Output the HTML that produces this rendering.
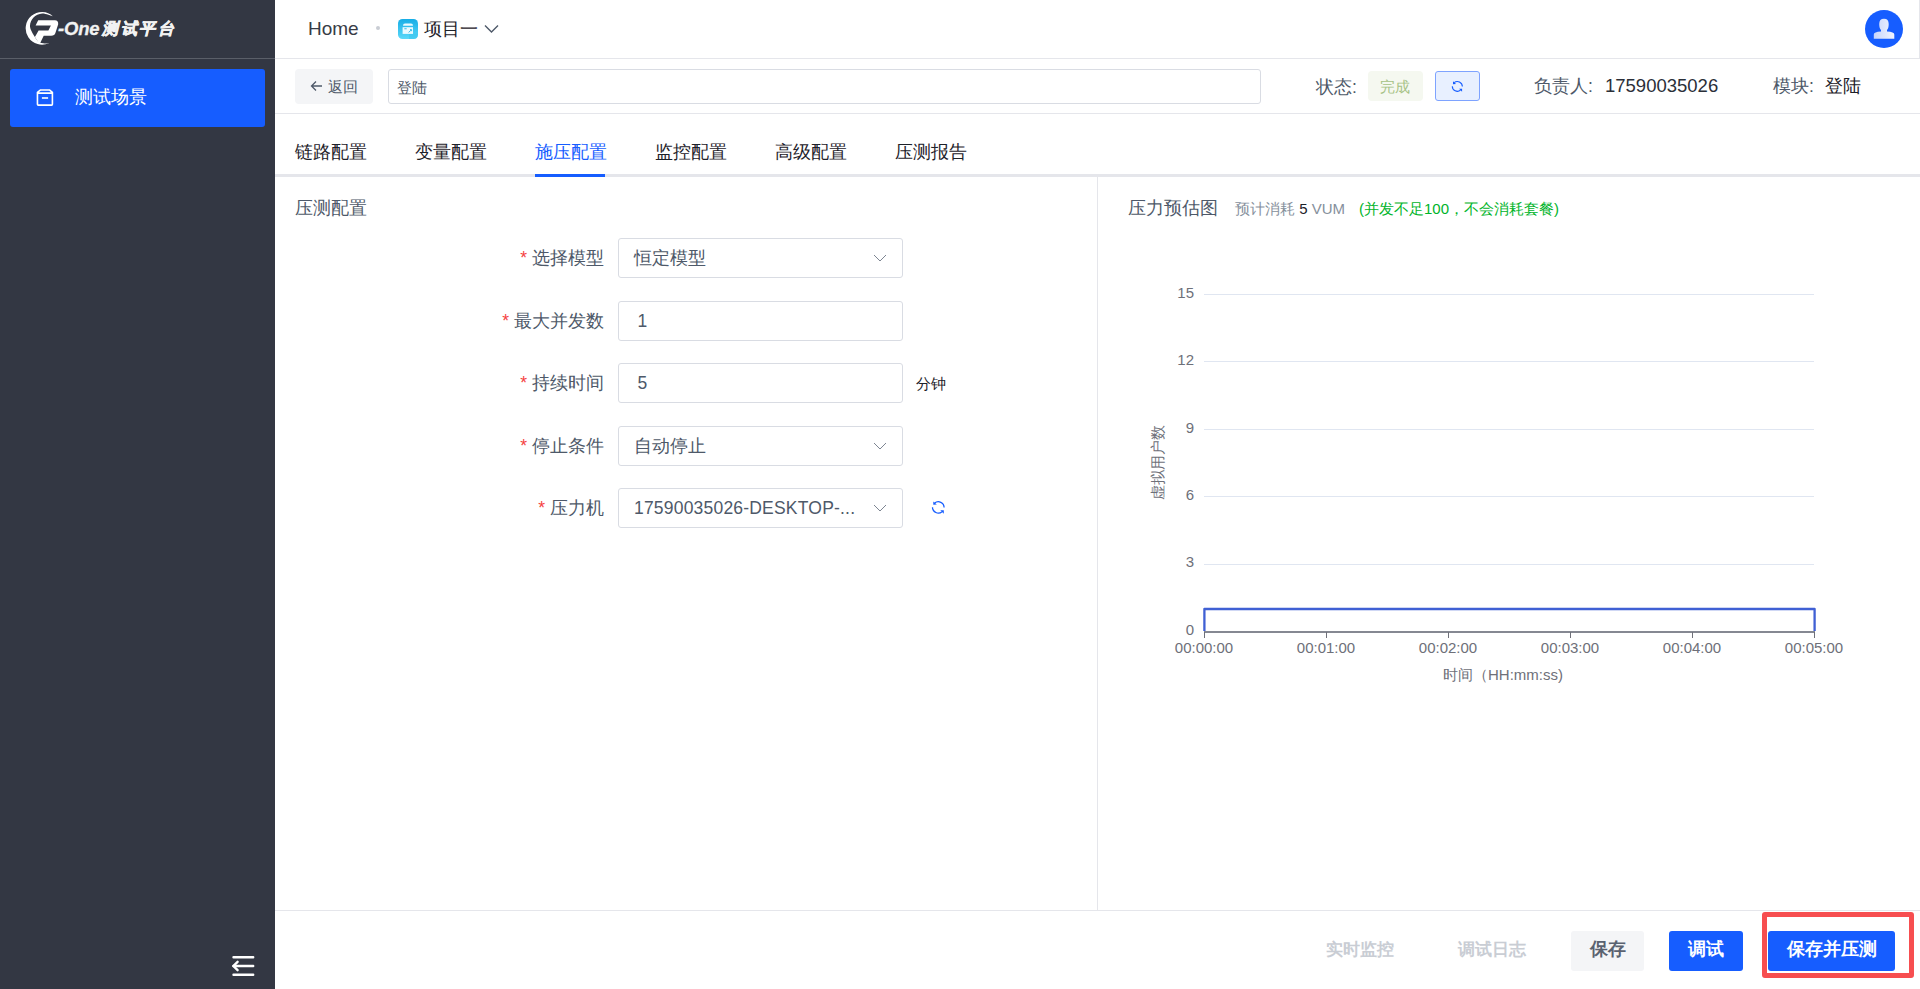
<!DOCTYPE html>
<html><head><meta charset="utf-8">
<style>
*{box-sizing:border-box;margin:0;padding:0}
html,body{width:1920px;height:989px;overflow:hidden;background:#fff;font-family:"Liberation Sans",sans-serif;color:#1d2129}
.abs{position:absolute}
#side{position:absolute;left:0;top:0;width:275px;height:989px;background:#333743}
#side .logoline{position:absolute;left:0;top:58px;width:275px;height:1px;background:#5a5e68}
#menu{position:absolute;left:10px;top:69px;width:255px;height:58px;background:#165dff;border-radius:3px}
#menu .t{position:absolute;left:65px;top:18px;font-size:17.5px;line-height:20px;color:#fff}
#hdr{position:absolute;left:275px;top:0;width:1645px;height:59px;border-bottom:1px solid #e5e6eb;border-right:1px solid #e5e6eb;background:#fff}
.txt{position:absolute;white-space:nowrap;line-height:1}
.row2line{position:absolute;left:275px;top:113px;width:1645px;height:1px;background:#e5e6eb}
.btnback{position:absolute;left:295px;top:69px;width:78px;height:35px;background:#f4f5f7;border-radius:4px}
.inp{position:absolute;border:1px solid #d9dce3;border-radius:3px;background:#fff}
.tabline{position:absolute;left:275px;top:174px;width:1645px;height:3px;background:#e5e6eb}
.tab{position:absolute;top:144px;font-size:17.5px;line-height:17px;color:#1d2129;white-space:nowrap}
.vdiv{position:absolute;left:1097px;top:177px;width:1px;height:733px;background:#e5e6eb}
.botline{position:absolute;left:275px;top:910px;width:1645px;height:1px;background:#e5e6eb}
.lbl{position:absolute;font-size:17.5px;color:#4e5969;white-space:nowrap;text-align:right;width:200px;left:404px;line-height:20px}
.lbl b{color:#f53f3f;font-weight:normal;margin-right:5px}
.sel{position:absolute;left:618px;width:285px;height:40px;border:1px solid #d9dce3;border-radius:3px}
.sel .v{position:absolute;left:15px;top:9px;font-size:17.5px;line-height:20px;color:#4e5969;white-space:nowrap}
.sel svg{position:absolute;left:254px;top:15px}
.yl{position:absolute;font-size:15px;color:#6e7079;line-height:15px;text-align:right;width:40px;left:1154px;margin-top:-1px}
.grid{position:absolute;left:1204px;width:610px;height:1px;background:#e0e6f1}
.xl{position:absolute;font-size:15px;color:#6e7079;line-height:15px;text-align:center;width:100px;top:640px}
.tick{position:absolute;top:632px;width:1px;height:6px;background:#6e7079}
.bbtn{position:absolute;top:931px;height:40px;border-radius:3px;font-size:17.5px;font-weight:bold;line-height:37px;text-align:center;white-space:nowrap}
</style></head>
<body>
<div id="side">
  <svg class="abs" style="left:20px;top:8px" width="160" height="42" viewBox="0 0 160 42">
    <path d="M33.1 8.4 A16.3 16.3 0 1 0 29.15 34.95 C28.36 35.04 26.09 35.66 24.40 35.50 C22.71 35.34 20.58 35.10 19.00 34.00 C17.42 32.90 16.40 31.50 14.90 28.90 C13.40 26.30 10.23 21.63 10.00 18.40 C9.77 15.17 11.47 11.63 13.50 9.50 C15.53 7.37 18.93 5.78 22.20 5.60 C25.47 5.42 31.28 7.93 33.10 8.40 Z" fill="#fff"/>
    <path d="M18.2 12.2 L34.9 12.2 Q38.4 12.2 38.2 16.3 L35.4 25 Q34.6 27.8 31.2 27.8 L23.7 27.8 L19.6 36.2 L14.9 28.9 L18.6 22.4 L28.4 22.4 L30.9 17.6 L15.6 17.6 Z" fill="#fff"/>
  </svg>
  <div class="txt" style="left:58px;top:20px;font-size:18.5px;font-weight:bold;font-style:italic;color:#f2f2f2;letter-spacing:-0.2px;-webkit-text-stroke:0.3px #f2f2f2">-One</div>
  <div class="txt" style="left:102px;top:20.5px;font-size:16px;font-weight:bold;font-style:italic;color:#f2f2f2;letter-spacing:2.7px;-webkit-text-stroke:0.6px #f2f2f2">测试平台</div>
  <div class="logoline"></div>
  <div id="menu">
    <svg class="abs" style="left:26px;top:19px" width="18" height="19" viewBox="0 0 18 19">
      <path d="M1.45 5.1 L1.45 4.3 L4.6 1.95 L13.4 1.95 L16.4 4.3 L16.4 5.1 M1.45 5.1 L16.4 5.1 L16.4 16.3 Q16.4 17.1 15.6 17.1 L2.25 17.1 Q1.45 17.1 1.45 16.3 Z" fill="none" stroke="#fff" stroke-width="1.6" stroke-linejoin="round"/>
      <rect x="5.9" y="9.2" width="6.2" height="1.6" fill="#fff"/>
    </svg>
    <div class="t">测试场景</div>
  </div>
  <svg class="abs" style="left:231px;top:955px" width="25" height="22" viewBox="0 0 25 22">
    <path d="M2.5 2.3 L22.2 2.3 M2.5 11 L22.2 11 M2.5 19.8 L22.2 19.8" stroke="#fff" stroke-width="2.4" stroke-linecap="round"/>
    <path d="M6.6 6.8 L2.3 11 L6.6 15.2" fill="none" stroke="#fff" stroke-width="2.4" stroke-linecap="round" stroke-linejoin="round"/>
  </svg>
</div>

<div id="hdr"></div>
<div class="txt" style="left:308px;top:20px;font-size:19px;color:#383c46;line-height:18px">Home</div>
<div class="abs" style="left:376px;top:26px;width:4px;height:4px;border-radius:2px;background:#c9cdd4"></div>
<svg class="abs" style="left:398px;top:19px" width="20" height="20" viewBox="0 0 20 20">
  <defs><linearGradient id="pg" x1="0" y1="0" x2="0" y2="1"><stop offset="0" stop-color="#16ade6"/><stop offset="1" stop-color="#5cd9f9"/></linearGradient></defs>
  <rect x="0" y="0" width="20" height="20" rx="4.5" fill="url(#pg)"/>
  <path d="M11 14.5 L20 14.5 L20 15.5 Q20 20 15.5 20 L11 20 Z" fill="#3cc4ee" opacity="0.6"/>
  <path d="M5 6.8 Q5 4.4 7 4.4 L13 4.4 Q15 4.4 15 6.8 Z" fill="#eafaff"/>
  <rect x="4.6" y="8.2" width="10.4" height="6.7" fill="#eafaff"/>
  <rect x="6.2" y="9.2" width="2.6" height="1" rx="0.5" fill="#3bbde9"/>
  <path d="M10.6 13.4 L13.2 11 M12 10.6 L13.6 10.6 L13.6 12.2" fill="none" stroke="#3bbde9" stroke-width="1"/>
</svg>
<div class="txt" style="left:424px;top:20px;font-size:17.5px;color:#1d2129;line-height:18px">项目一</div>
<svg class="abs" style="left:484px;top:24px" width="15" height="10" viewBox="0 0 15 10"><path d="M1 1.5 L7.5 8 L14 1.5" fill="none" stroke="#4e5969" stroke-width="1.4"/></svg>
<svg class="abs" style="left:1865px;top:10px" width="38" height="38" viewBox="0 0 38 38">
  <circle cx="19" cy="19" r="19" fill="#165dff"/>
  <defs><linearGradient id="av" x1="0" y1="0" x2="1" y2="0"><stop offset="0" stop-color="#c7d5fb"/><stop offset="1" stop-color="#f0f4ff"/></linearGradient></defs>
  <path d="M14.2 14 Q14.2 8.7 19 8.7 Q23.7 8.7 23.7 14 Q23.7 18.5 22 20 L22 21.6 Q29.3 21.9 29.3 24.5 L29.3 28.8 L8.8 28.8 L8.8 24.5 Q8.8 21.9 16 21.6 L16 20 Q14.2 18.5 14.2 14 Z" fill="url(#av)"/>
</svg>

<!-- row2 -->
<div class="btnback"></div>
<svg class="abs" style="left:310px;top:80px" width="13" height="12" viewBox="0 0 13 12"><path d="M12 6 L1.5 6 M6 1.5 L1.5 6 L6 10.5" fill="none" stroke="#4e5969" stroke-width="1.3"/></svg>
<div class="txt" style="left:328px;top:79px;font-size:15px;color:#4e5969;line-height:15px">返回</div>
<div class="inp" style="left:388px;top:69px;width:873px;height:35px"></div>
<div class="txt" style="left:397px;top:80px;font-size:15px;color:#4e5969;line-height:15px">登陆</div>
<div class="txt" style="left:1316px;top:78px;font-size:17.5px;color:#4e5969;line-height:18px">状态:</div>
<div class="abs" style="left:1368px;top:71px;width:55px;height:30px;background:#f5f8f0;border-radius:4px"></div>
<div class="txt" style="left:1380px;top:79px;font-size:15px;color:#a6c285;line-height:15px">完成</div>
<div class="abs" style="left:1435px;top:71px;width:45px;height:30px;background:#e8f0ff;border:1px solid #7ea3ff;border-radius:3px"></div>
<svg class="abs" style="left:1451px;top:80px" width="13" height="13" viewBox="0 0 15 15">
  <path d="M3.6 3.1 A5.8 5.8 0 0 1 13.1 7.6 M1.5 7.2 A5.8 5.8 0 0 0 11 11.7" fill="none" stroke="#165dff" stroke-width="1.25"/>
  <path d="M2.3 1.4 L2.3 4.8 L5.8 4.6 Z M9.3 10.2 L12.8 10.2 L12.8 13.7 Z" fill="#165dff"/>
</svg>
<div class="txt" style="left:1534px;top:77px;font-size:17.5px;color:#4e5969;line-height:18px">负责人:</div>
<div class="txt" style="left:1605px;top:77px;font-size:18.5px;color:#2b2f38;line-height:18px">17590035026</div>
<div class="txt" style="left:1773px;top:77px;font-size:17.5px;color:#4e5969;line-height:18px">模块:</div>
<div class="txt" style="left:1825px;top:77px;font-size:17.5px;color:#1d2129;line-height:18px">登陆</div>
<div class="row2line"></div>

<!-- tabs -->
<div class="tabline"></div>
<div class="abs" style="left:535px;top:174px;width:70px;height:3px;background:#165dff"></div>
<div class="tab" style="left:295px">链路配置</div>
<div class="tab" style="left:415px">变量配置</div>
<div class="tab" style="left:535px;color:#165dff">施压配置</div>
<div class="tab" style="left:655px">监控配置</div>
<div class="tab" style="left:775px">高级配置</div>
<div class="tab" style="left:895px">压测报告</div>

<div class="vdiv"></div>
<div class="botline"></div>

<!-- left form -->
<div class="txt" style="left:295px;top:199px;font-size:17.5px;color:#4e5969;line-height:18px">压测配置</div>

<div class="lbl" style="top:248px"><b>*</b>选择模型</div>
<div class="sel" style="top:238px"><div class="v">恒定模型</div><svg width="14" height="8" viewBox="0 0 14 8"><path d="M1 1 L7 7 L13 1" fill="none" stroke="#7d8592" stroke-width="1"/></svg></div>

<div class="lbl" style="top:311px"><b>*</b>最大并发数</div>
<div class="sel" style="top:301px"><div class="v" style="left:18.5px;color:#4e5969">1</div></div>

<div class="lbl" style="top:373px"><b>*</b>持续时间</div>
<div class="sel" style="top:363px"><div class="v" style="left:18.5px;color:#4e5969">5</div></div>
<div class="txt" style="left:916px;top:376px;font-size:15px;color:#1d2129;line-height:15px">分钟</div>

<div class="lbl" style="top:436px"><b>*</b>停止条件</div>
<div class="sel" style="top:426px"><div class="v">自动停止</div><svg width="14" height="8" viewBox="0 0 14 8"><path d="M1 1 L7 7 L13 1" fill="none" stroke="#7d8592" stroke-width="1"/></svg></div>

<div class="lbl" style="top:498px"><b>*</b>压力机</div>
<div class="sel" style="top:488px"><div class="v" style="letter-spacing:0.2px">17590035026-DESKTOP-...</div><svg width="14" height="8" viewBox="0 0 14 8"><path d="M1 1 L7 7 L13 1" fill="none" stroke="#7d8592" stroke-width="1"/></svg></div>
<svg class="abs" style="left:931px;top:500px" width="15" height="15" viewBox="0 0 15 15">
  <path d="M3.6 3.1 A5.8 5.8 0 0 1 13.1 7.6 M1.5 7.2 A5.8 5.8 0 0 0 11 11.7" fill="none" stroke="#165dff" stroke-width="1.25"/>
  <path d="M2.3 1.4 L2.3 4.8 L5.8 4.6 Z M9.3 10.2 L12.8 10.2 L12.8 13.7 Z" fill="#165dff"/>
</svg>

<!-- chart -->
<div class="txt" style="left:1128px;top:199px;font-size:17.5px;color:#4e5969;line-height:18px">压力预估图</div>
<div class="txt" style="left:1235px;top:201px;font-size:15px;color:#86909c;line-height:15px">预计消耗 <span style="color:#1d2129">5</span> VUM</div>
<div class="txt" style="left:1359px;top:201px;font-size:15px;color:#00b42a;line-height:15px">(并发不足100，不会消耗套餐)</div>

<div class="grid" style="top:294px"></div>
<div class="grid" style="top:361px"></div>
<div class="grid" style="top:429px"></div>
<div class="grid" style="top:496px"></div>
<div class="grid" style="top:564px"></div>
<div class="yl" style="top:286px">15</div>
<div class="yl" style="top:353px">12</div>
<div class="yl" style="top:421px">9</div>
<div class="yl" style="top:488px">6</div>
<div class="yl" style="top:555px">3</div>
<div class="yl" style="top:623px">0</div>
<div class="abs" style="left:1204px;top:631px;width:611px;height:2px;background:#858892"></div>
<div class="tick" style="left:1204px"></div>
<div class="tick" style="left:1326px"></div>
<div class="tick" style="left:1448px"></div>
<div class="tick" style="left:1570px"></div>
<div class="tick" style="left:1692px"></div>
<div class="tick" style="left:1814px"></div>
<div class="xl" style="left:1154px">00:00:00</div>
<div class="xl" style="left:1276px">00:01:00</div>
<div class="xl" style="left:1398px">00:02:00</div>
<div class="xl" style="left:1520px">00:03:00</div>
<div class="xl" style="left:1642px">00:04:00</div>
<div class="xl" style="left:1764px">00:05:00</div>
<svg class="abs" style="left:1200px;top:600px" width="620" height="40" viewBox="0 0 620 40">
  <path d="M4.4 31 L4.4 9 L614.6 9 L614.6 31" fill="none" stroke="#4060d4" stroke-width="2.3" stroke-linejoin="round"/>
</svg>
<div class="txt" style="left:1443px;top:667px;font-size:15px;color:#6e7079;line-height:15px">时间（HH:mm:ss)</div>
<div class="txt" style="left:1120px;top:455px;width:75px;font-size:15px;color:#6e7079;line-height:15px;transform:rotate(-90deg);transform-origin:center;text-align:center;left:1120px">虚拟用户数</div>

<!-- bottom buttons -->
<div class="bbtn" style="left:1305px;width:110px;color:#c9cdd4;font-size:17px">实时监控</div>
<div class="bbtn" style="left:1437px;width:110px;color:#c9cdd4;font-size:17px">调试日志</div>
<div class="bbtn" style="left:1571px;width:73px;background:#f4f5f7;color:#5a6270">保存</div>
<div class="bbtn" style="left:1669px;width:74px;background:#165dff;color:#fff">调试</div>
<div class="bbtn" style="left:1768px;width:127px;background:#165dff;color:#fff">保存并压测</div>
<div class="abs" style="left:1762px;top:912px;width:152px;height:66px;border:5px solid #f74e50;border-radius:3px"></div>
</body></html>
